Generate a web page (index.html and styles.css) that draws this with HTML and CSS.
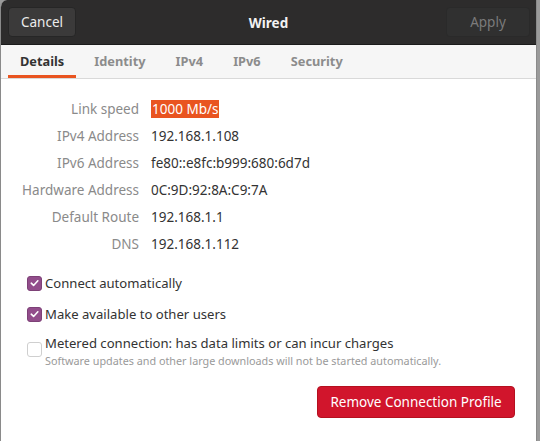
FILE: index.html
```html
<!DOCTYPE html>
<html>
<head>
<meta charset="utf-8">
<link rel="stylesheet" href="styles.css">
</head>
<body>
<div class="window">
  <header class="headerbar">
    <button class="hb-btn cancel">Cancel</button>
    <div class="title">Wired</div>
    <button class="hb-btn apply">Apply</button>
  </header>
  <nav class="tabs">
    <div class="tab active">Details</div>
    <div class="tab">Identity</div>
    <div class="tab">IPv4</div>
    <div class="tab">IPv6</div>
    <div class="tab">Security</div>
  </nav>
  <main class="content">
    <div class="details">
      <div class="label">Link speed</div><div class="value"><span class="sel">1000 Mb/s</span></div>
      <div class="label">IPv4 Address</div><div class="value">192.168.1.108</div>
      <div class="label">IPv6 Address</div><div class="value">fe80::e8fc:b999:680:6d7d</div>
      <div class="label">Hardware Address</div><div class="value">0C:9D:92:8A:C9:7A</div>
      <div class="label">Default Route</div><div class="value">192.168.1.1</div>
      <div class="label">DNS</div><div class="value">192.168.1.112</div>
    </div>
    <div class="checks">
      <div class="check row1">
        <span class="box on"><svg viewBox="0 0 14 14" width="14" height="14"><path d="M3.5 7.2 L6 9.6 L10.6 4.6" fill="none" stroke="#fff" stroke-width="1.7" stroke-linecap="round" stroke-linejoin="round"/></svg></span>
        <span class="clabel">Connect automatically</span>
      </div>
      <div class="check row2">
        <span class="box on"><svg viewBox="0 0 14 14" width="14" height="14"><path d="M3.5 7.2 L6 9.6 L10.6 4.6" fill="none" stroke="#fff" stroke-width="1.7" stroke-linecap="round" stroke-linejoin="round"/></svg></span>
        <span class="clabel">Make available to other users</span>
      </div>
      <div class="check row3">
        <span class="box"></span>
        <div class="ctext">
          <span class="clabel">Metered connection: has data limits or can incur charges</span>
          <span class="sub">Software updates and other large downloads will not be started automatically.</span>
        </div>
      </div>
    </div>
    <div class="actions">
      <button class="remove">Remove Connection Profile</button>
    </div>
  </main>
</div>
</body>
</html>
```
FILE: styles.css
```css
* { box-sizing: border-box; }
html, body { margin: 0; padding: 0; }
body {
  width: 540px;
  height: 441px;
  overflow: hidden;
  background: #9a9a9a;
  font-family: "Noto Sans", "DejaVu Sans", sans-serif;
  font-size: 13.5px;
  color: #333;
}
.window {
  width: 537px;
  height: 441px;
  background: #fff;
  border-left: 1px solid #8a8a8a;
  border-right: 1px solid #8a8a8a;
  border-top-left-radius: 7px;
  overflow: hidden;
  display: flex;
  flex-direction: column;
}
.headerbar {
  height: 45px;
  background: #2d2c2c;
  border-bottom: 1px solid #1b1b1b;
  display: flex;
  align-items: flex-start;
  justify-content: space-between;
  padding: 7px 6px 0 7px;
  position: relative;
}
.hb-btn {
  font-family: inherit;
  font-size: 13.5px;
  height: 30px;
  border-radius: 4px;
  border: 1px solid #262626;
}
.cancel {
  width: 68px;
  background: #3b3a3a;
  color: #ececec;
}
.apply {
  width: 84px;
  background: #303030;
  color: #7b7b7b;
  border-color: #2a2a2a;
}
.title {
  color: #f2f2f2;
  font-weight: bold;
  font-size: 13.5px;
  line-height: 30px;
  position: absolute;
  left: 0;
  right: 0;
  top: 8px;
  text-align: center;
  pointer-events: none;
}
.tabs {
  height: 34px;
  background: #f6f6f6;
  border-bottom: 1px solid #d9d9d9;
  display: flex;
  padding-left: 7px;
}
.tab {
  padding: 2px 12px 0;
  margin-right: 6px;
  line-height: 28px;
  height: 33px;
  font-weight: bold;
  color: #8c8c8c;
  font-size: 12.8px;
}
.tab.active {
  color: #333;
  border-bottom: 3px solid #e95420;
}
.content {
  flex: 1;
  display: flex;
  flex-direction: column;
  padding: 16px 0 0 0;
}
.details {
  display: grid;
  grid-template-columns: 138px 1fr;
  column-gap: 12px;
  grid-auto-rows: 27px;
  align-items: center;
}
.label {
  text-align: right;
  color: #8a8a8a;
}
.value { color: #333; }
.sel {
  background: #e95420;
  color: #fff;
  padding: 0 1px;
}
.checks {
  margin-top: 13px;
  padding-left: 26px;
  display: flex;
  flex-direction: column;
}
.check {
  display: flex;
  align-items: center;
  gap: 3px;
}
.row1 { height: 26px; }
.row2 { height: 26px; margin-top: 5px; }
.row3 { align-items: flex-start; margin-top: 9px; }
.box {
  width: 15px;
  height: 15px;
  border-radius: 3px;
  border: 1px solid #cfcfcf;
  background: #fff;
  display: flex;
  align-items: center;
  justify-content: center;
  flex: none;
}
.box.on {
  background: #924d8b;
  border-color: #7d4177;
}
.row3 .box { margin-top: 6px; }
.ctext {
  display: flex;
  flex-direction: column;
}
.clabel { color: #333; line-height: 18px; font-size: 13.1px; }
.row3 .clabel { line-height: 15px; }
.sub {
  font-size: 10.8px;
  color: #9a9a9a;
  line-height: 13px;
  margin-top: 3px;
}
.actions {
  display: flex;
  justify-content: flex-end;
  padding-right: 21px;
  margin-top: 19px;
}
.remove {
  font-family: inherit;
  font-size: 13.5px;
  width: 198px;
  height: 32px;
  background: #d1152c;
  color: #fff;
  border: 1px solid #b5101f;
  border-radius: 4px;
}
```
